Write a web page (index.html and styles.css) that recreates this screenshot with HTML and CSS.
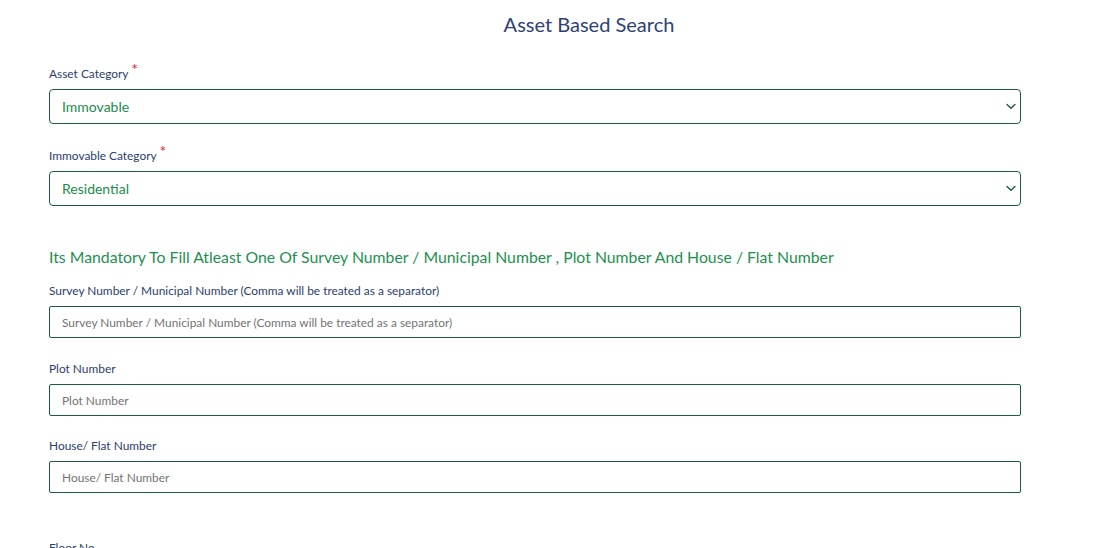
FILE: index.html
```html
<!DOCTYPE html>
<html lang="en">
<head>
<meta charset="utf-8">
<title>Asset Based Search</title>
<link rel="stylesheet" href="styles.css">
</head>
<body>
<div class="page">
  <h1 class="title">Asset Based Search</h1>
  <form class="form">
    <div class="group group-first">
      <label class="label">Asset Category <span class="req">*</span></label>
      <div class="select-wrap">
        <select class="control select"><option>Immovable</option></select>
        <svg class="chev" width="10" height="7" viewBox="0 0 10 7"><path d="M1 1.5 L5 5.2 L9 1.5" fill="none" stroke="#1e5c4a" stroke-width="1.4" stroke-linecap="round"/></svg>
      </div>
    </div>
    <div class="group group-last-select">
      <label class="label">Immovable Category <span class="req">*</span></label>
      <div class="select-wrap">
        <select class="control select"><option>Residential</option></select>
        <svg class="chev" width="10" height="7" viewBox="0 0 10 7"><path d="M1 1.5 L5 5.2 L9 1.5" fill="none" stroke="#1e5c4a" stroke-width="1.4" stroke-linecap="round"/></svg>
      </div>
    </div>
    <h2 class="notice">Its Mandatory To Fill Atleast One Of Survey Number / Municipal Number , Plot Number And House / Flat Number</h2>
    <div class="group">
      <label class="label">Survey Number / Municipal Number (Comma will be treated as a separator)</label>
      <input class="control input" type="text" placeholder="Survey Number / Municipal Number (Comma will be treated as a separator)">
    </div>
    <div class="group group-tight">
      <label class="label">Plot Number</label>
      <input class="control input" type="text" placeholder="Plot Number">
    </div>
    <div class="group">
      <label class="label">House/ Flat Number</label>
      <input class="control input" type="text" placeholder="House/ Flat Number">
    </div>
    <div class="group group-far">
      <label class="label">Floor No</label>
    </div>
  </form>
</div>
</body>
</html>
```
FILE: styles.css
```css
* { box-sizing: border-box; }
html, body { margin: 0; padding: 0; background: #fff; overflow: hidden; }
body { font-family: Lato, "Open Sans", Arial, sans-serif; color: #2c3e6c; }
.page { width: 1104px; height: 548px; overflow: hidden; }
.title {
  margin: 0;
  padding: 11px 0 0 74px;
  text-align: center;
  font-size: 20px;
  line-height: 26px;
  font-weight: 400;
  color: #2d4275;
}
.form { width: 972px; margin: 28px 0 0 49px; }
.group { margin-bottom: 22px; }
.group-first { margin-bottom: 23px; }
.group-tight { margin-bottom: 21px; }
.label {
  display: block;
  font-size: 11.9px;
  line-height: 18px;
  height: 18px;
  color: #2c3e6c;
  margin-bottom: 6px;
}
.req {
  color: #d62b3a;
  font-size: 16px;
  line-height: 0;
  position: relative;
  top: -3px;
}
.select-wrap { position: relative; }
.control {
  display: block;
  width: 100%;
  border: 1px solid #1e5c4a;
  border-radius: 4px;
  background: #fff;
  font-family: Lato, "Open Sans", Arial, sans-serif;
  outline: none;
  margin: 0;
}
.select {
  -webkit-appearance: none;
  appearance: none;
  height: 35px;
  padding: 0 30px 0 12px;
  font-size: 14px;
  color: #1e8a4d;
}
.chev { position: absolute; right: 5px; top: 14px; }
.group-last-select { margin-bottom: 40px; }
.notice {
  margin: 0 0 14px;
  font-size: 15.8px;
  line-height: 22px;
  font-weight: 400;
  color: #1e9050;
}
.input {
  height: 32px;
  padding: 0 12px;
  font-size: 11.9px;
  color: #333;
  border-radius: 2px;
}
.input::placeholder { color: #737373; }
.group-far { margin-top: 46px; margin-bottom: 0; }
```
